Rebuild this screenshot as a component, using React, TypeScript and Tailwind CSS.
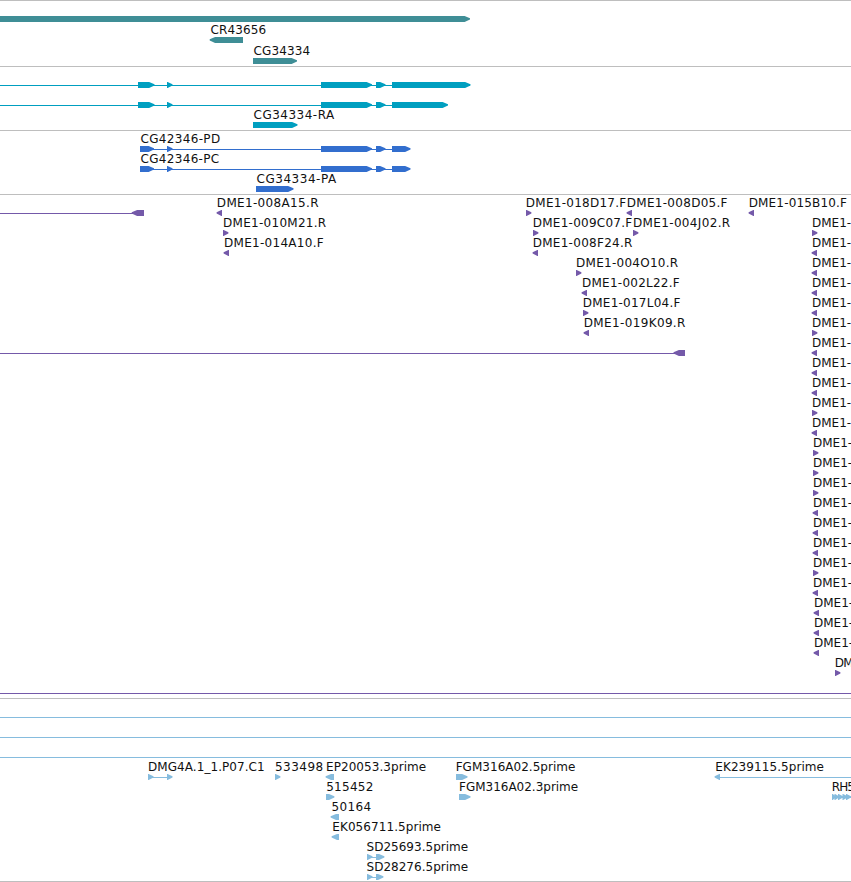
import React from "react";

type Dir = "left" | "right";

// [start, end, direction]
type Segment = [number, number, Dir];

interface Feature {
  y: number;
  segments: Segment[];
  line?: [number, number];
  // [text, x, width]
  label?: [string, number, number];
}

interface TrackProps {
  name: string;
  top: number;
  height: number;
  color: string;
  features: Feature[];
  lines?: number[];
}

const WIDTH = 851;

const geneFeatures: Feature[] = [
  { y: 16, segments: [[0, 470, "right"]] },
  { y: 37, segments: [[209.7, 243, "left"]], label: ["CR43656", 210, 56] },
  { y: 58, segments: [[253, 297, "right"]], label: ["CG34334", 253, 57] },
];

const transcriptFeatures: Feature[] = [
  {
    y: 82,
    line: [0, 470],
    segments: [
      [138, 154.5, "right"],
      [167, 172.5, "right"],
      [321, 372, "right"],
      [376, 385.5, "right"],
      [392, 470.5, "right"],
    ],
  },
  {
    y: 102,
    line: [0, 447],
    segments: [
      [138, 154.5, "right"],
      [167, 172.5, "right"],
      [321, 372, "right"],
      [376, 385.5, "right"],
      [392, 448, "right"],
    ],
  },
  { y: 122, segments: [[253, 297.5, "right"]], label: ["CG34334-RA", 253, 81] },
];

const cdsSegments: Segment[] = [
  [140, 154, "right"],
  [167, 172.5, "right"],
  [321, 372, "right"],
  [376, 385.5, "right"],
  [392, 410.5, "right"],
];

const proteinFeatures: Feature[] = [
  { y: 146, line: [140, 409], segments: cdsSegments, label: ["CG42346-PD", 140, 80] },
  { y: 166, line: [140, 409], segments: cdsSegments, label: ["CG42346-PC", 140, 79] },
  { y: 186, segments: [[256, 293.5, "right"]], label: ["CG34334-PA", 256, 80] },
];

const small = (
  y: number,
  x: number,
  dir: Dir,
  text: string,
  textX: number,
  width: number
): Feature => ({
  y,
  segments: [[dir === "left" ? x - 0.4 : x, dir === "left" ? x + 5 : x + 5.4, dir]],
  label: [text, textX, width],
});

// stacked clones running off the right edge
const stackDirs = "RLLLLRLLLRLRRRLLLRLLLL".split("");

const stacked: Feature[] = stackDirs.map((d, i) => {
  const shift = i < 11 ? 0 : i < 19 ? 1 : 2;
  return small(
    230 + i * 20,
    812 + shift,
    d === "L" ? "left" : "right",
    "DME1-",
    811.5 + shift,
    39.5
  );
});

const cloneFeatures: Feature[] = [
  { y: 210, line: [0, 134], segments: [[131.7, 144, "left"]] },
  { y: 350, line: [0, 676], segments: [[673.5, 685, "left"]] },
  small(210, 217, "left", "DME1-008A15.R", 216.3, 102),
  small(230, 223, "right", "DME1-010M21.R", 222.5, 103.5),
  small(250, 224, "left", "DME1-014A10.F", 223.5, 100),
  small(210, 526, "right", "DME1-018D17.F", 525.3, 100.7),
  small(210, 627, "left", "DME1-008D05.F", 626.3, 101),
  small(230, 533, "right", "DME1-009C07.F", 532.2, 99.8),
  small(230, 633, "right", "DME1-004J02.R", 632.5, 97.5),
  small(250, 533, "left", "DME1-008F24.R", 532.2, 100),
  small(270, 576, "right", "DME1-004O10.R", 575.5, 102.5),
  small(290, 582, "left", "DME1-002L22.F", 581.5, 98),
  small(310, 583, "right", "DME1-017L04.F", 582.2, 98),
  small(330, 584, "left", "DME1-019K09.R", 583.2, 102),
  small(210, 749, "left", "DME1-015B10.F", 748.2, 98.5),
  ...stacked,
  small(670, 835, "right", "DM", 834.3, 19),
];

const estFeatures: Feature[] = [
  {
    y: 774,
    line: [148, 171],
    segments: [
      [148, 153.5, "right"],
      [167, 172.5, "right"],
    ],
    label: ["DMG4A.1_1.P07.C1", 147.5, 117],
  },
  small(774, 275, "right", "533498", 274.5, 48.5),
  { y: 774, segments: [[325.6, 334, "left"]], label: ["EP20053.3prime", 325.5, 100.5] },
  { y: 794, segments: [[326, 334.4, "right"]], label: ["515452", 325.7, 47.5] },
  { y: 814, segments: [[330.6, 339, "left"]], label: ["50164", 331, 40] },
  { y: 834, segments: [[331.6, 339, "left"]], label: ["EK056711.5prime", 331.8, 109] },
  {
    y: 854,
    line: [367, 382],
    segments: [
      [367, 372.5, "right"],
      [376, 384.4, "right"],
    ],
    label: ["SD25693.5prime", 366, 102],
  },
  {
    y: 874,
    line: [367, 382],
    segments: [
      [367, 372.5, "right"],
      [376, 383.4, "right"],
    ],
    label: ["SD28276.5prime", 366, 102],
  },
  { y: 774, segments: [[456, 467.5, "right"]], label: ["FGM316A02.5prime", 455.2, 120] },
  { y: 794, segments: [[459, 470.5, "right"]], label: ["FGM316A02.3prime", 458.5, 119.5] },
  {
    y: 774,
    line: [716, 851],
    segments: [[714.6, 720, "left"]],
    label: ["EK239115.5prime", 714.8, 109],
  },
  {
    y: 794,
    line: [832, 851],
    segments: [
      [832, 836, "right"],
      [834.5, 839, "right"],
      [838, 843, "right"],
      [842.5, 847.5, "right"],
      [846, 851, "right"],
    ],
    label: ["RH5", 831.2, 23.5],
  },
];

// arrow heads are blunt, a little over a pixel high at the tip
const arrowPoints = ([x1, x2, dir]: Segment, y: number) => {
  const head = Math.min(6, x2 - x1) - 0.6;
  if (dir === "right") {
    const neck = x2 - head;
    return `${x1},${y} ${neck},${y} ${x2},${y + 2.2} ${x2},${y + 3.5} ${neck},${y + 6} ${x1},${y + 6}`;
  }
  const neck = x1 + head;
  return `${x2},${y} ${neck},${y} ${x1},${y + 2.2} ${x1},${y + 3.5} ${neck},${y + 6} ${x2},${y + 6}`;
};

const Track = ({ name, top, height, color, features, lines = [] }: TrackProps) => (
  <section className="border-t border-[#bebebe]" aria-label={name}>
    <svg
      className={`block w-full ${color}`}
      width={WIDTH}
      height={height}
      viewBox={`0 ${top} ${WIDTH} ${height}`}
      fill="currentColor"
    >
      {lines.map((y) => (
        <rect key={y} x={0} y={y} width={WIDTH} height={1} />
      ))}
      {features.map((feature, i) => (
        <g key={i}>
          {feature.line && (
            <rect
              x={feature.line[0]}
              y={feature.y + 3}
              width={feature.line[1] - feature.line[0]}
              height={1}
            />
          )}
          {feature.segments.map((segment, j) => (
            <polygon key={j} points={arrowPoints(segment, feature.y)} />
          ))}
          {feature.label && (
            <text
              x={feature.label[1] + 0.5}
              y={feature.y - 3}
              textLength={feature.label[2] - 0.3}
              className="fill-[#111111] font-['DejaVu_Sans',sans-serif] text-[12px]"
            >
              {feature.label[0]}
            </text>
          )}
        </g>
      ))}
    </svg>
  </section>
);

const App = () => {
  return (
    <main className="h-[882px] w-[851px] overflow-hidden border-b border-[#bebebe] bg-white">
      <Track name="Genes" top={1} height={65} color="text-[#3f8e96]" features={geneFeatures} />
      <Track name="Transcripts" top={67} height={63} color="text-[#009fc0]" features={transcriptFeatures} />
      <Track name="Proteins" top={131} height={63} color="text-[#326ece]" features={proteinFeatures} />
      <Track name="Clones" top={195} height={503} color="text-[#7459a9]" features={cloneFeatures} lines={[693]} />
      <Track name="ESTs" top={699} height={182} color="text-[#86bcde]" features={estFeatures} lines={[717, 737, 757]} />
    </main>
  );
};

export default App;
